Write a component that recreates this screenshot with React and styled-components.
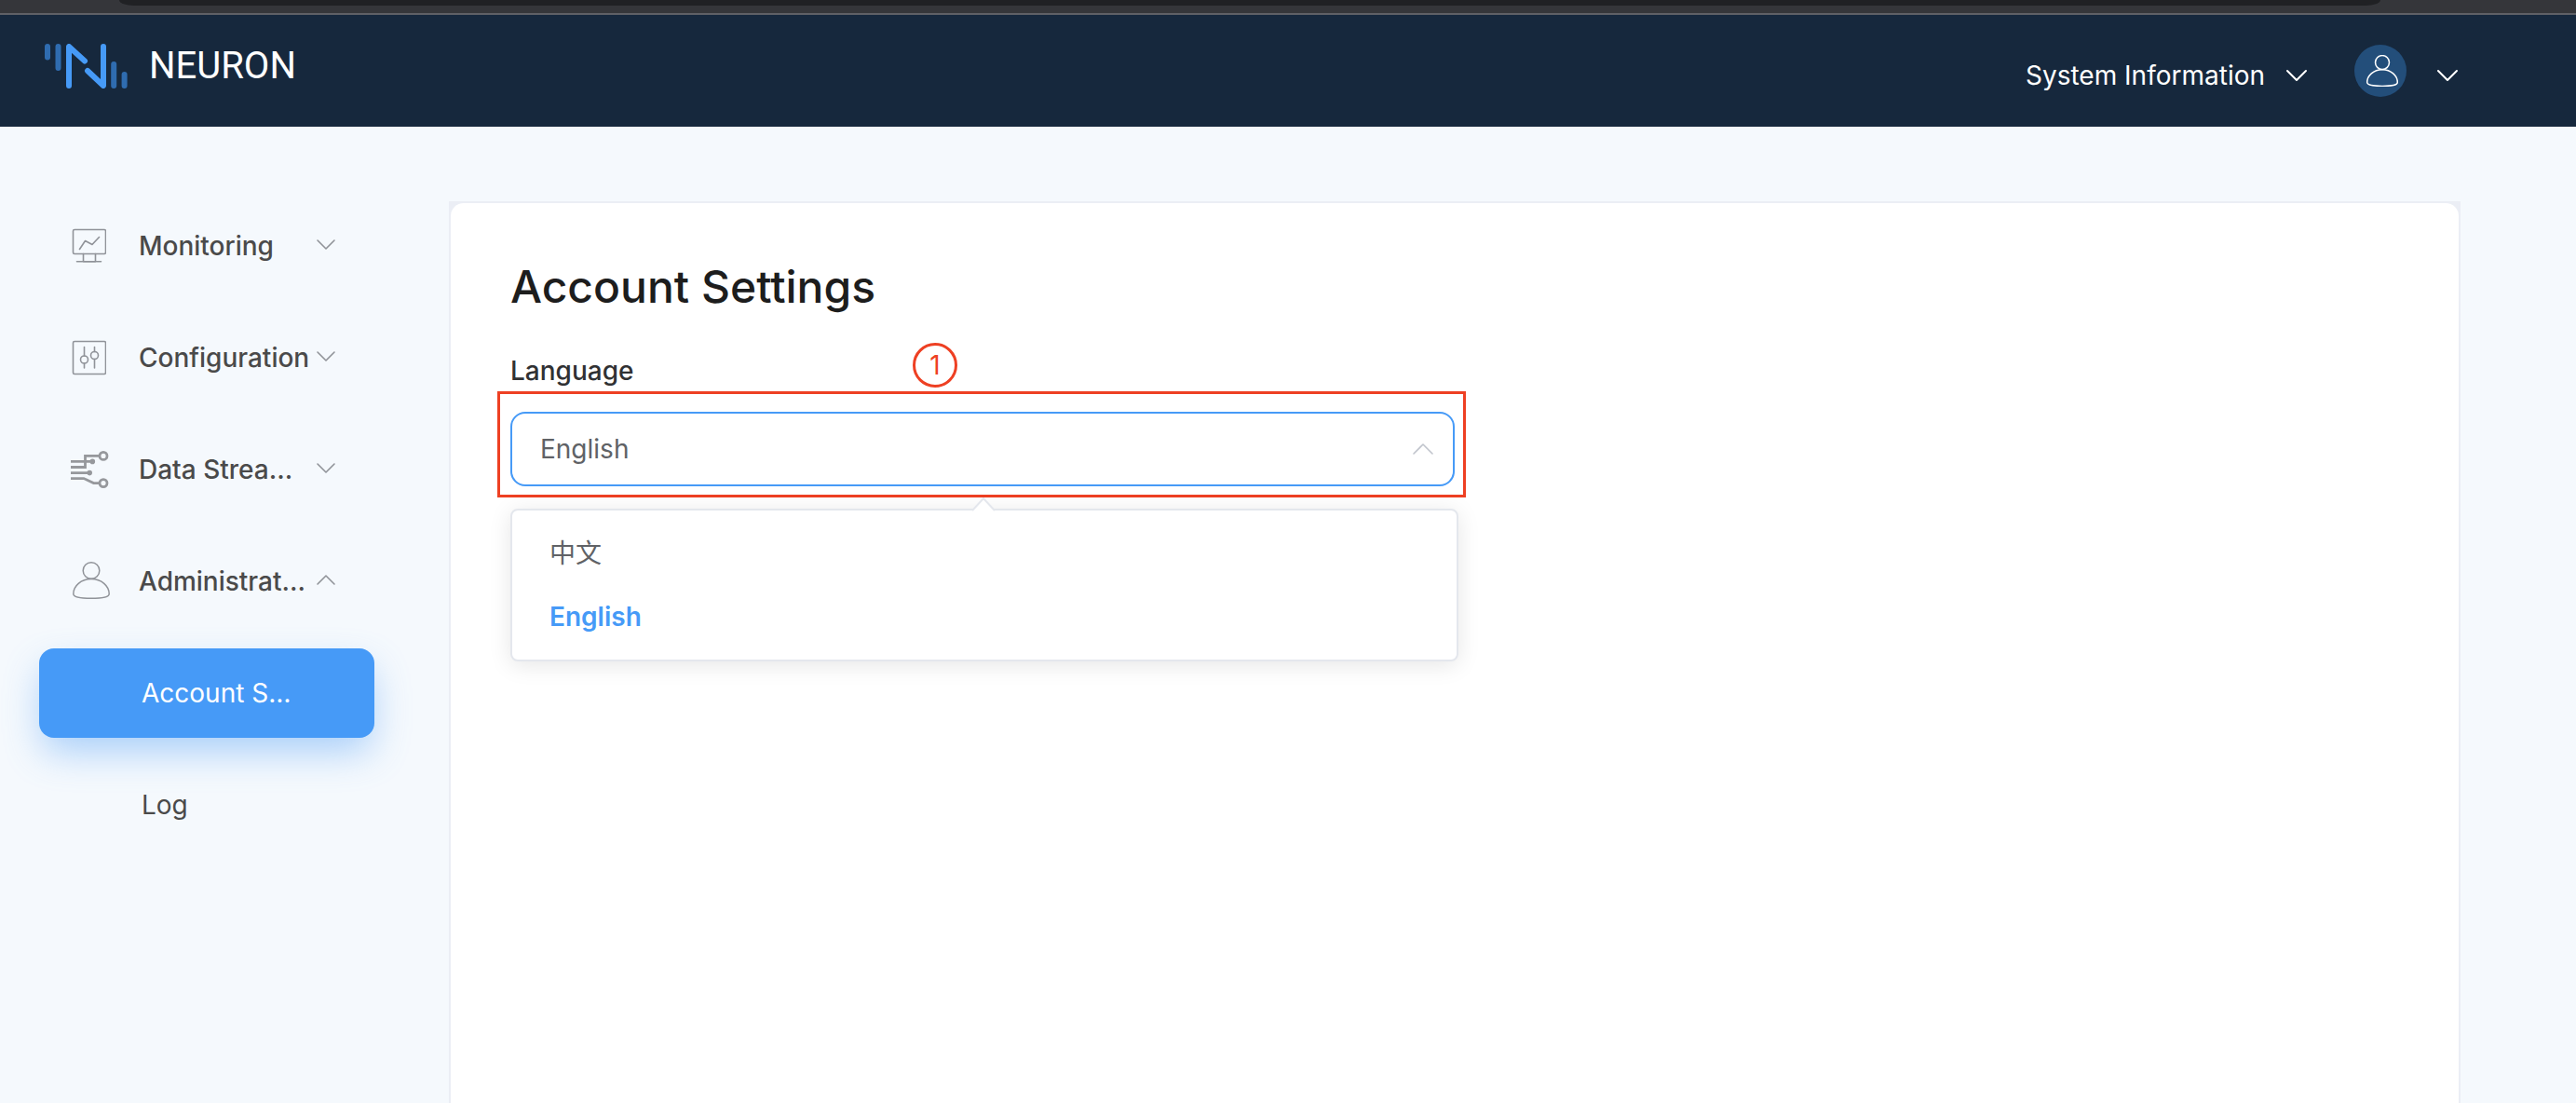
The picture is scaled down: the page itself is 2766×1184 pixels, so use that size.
import React from "react";
import styled, { createGlobalStyle, css } from "styled-components";

const GlobalStyle = createGlobalStyle`
  *, *::before, *::after { box-sizing: border-box; }
  html, body { margin: 0; background: #f5f9fd; }
  body {
    overflow: hidden;
    font-family: Inter, "Noto Sans CJK SC", sans-serif;
    font-size: 28px;
    line-height: 40px;
    color: #4a4a4a;
  }
  button, select { font: inherit; }
`;

const Page = styled.div`
  display: flex;
  flex-direction: column;
  height: 100vh;
`;

const BrowserEdge = styled.div`
  flex: none;
  height: 16px;
  padding: 0 210px 0 128px;
  background: #35363a;
  border-bottom: 2px solid #5f6066;
`;

const AddressBar = styled.div`
  height: 6px;
  background: #202124;
  border-radius: 0 0 16px 16px / 0 0 6px 6px;
`;

const TopBar = styled.header`
  flex: none;
  display: flex;
  justify-content: space-between;
  height: 120px;
  padding: 0 124px 0 48px;
  background: #16283d;
  color: #fff;
`;

const Brand = styled.a`
  display: flex;
  align-items: center;
  gap: 20px;
  height: 110px;
  color: #fff;
  font-family: Roboto, sans-serif;
  font-size: 40px;
  text-decoration: none;
`;

const Actions = styled.div`
  display: flex;
  gap: 48px;
  height: 120px;
  padding-top: 10px;
  align-items: center;
`;

const HeaderButton = styled.button`
  display: flex;
  align-items: center;
  gap: ${(p) => p.$gap}px;
  padding: 0;
  border: 0;
  background: none;
  color: #fff;
`;

const Avatar = styled.span`
  display: grid;
  place-items: center;
  width: 56px;
  height: 56px;
  margin-bottom: 10px;
  padding-left: 4px;
  border-radius: 50%;
  background: #234e7a;
`;

const Body = styled.div`
  flex: 1;
  display: flex;
  gap: 80px;
  padding: 80px 124px 0 42px;
`;

const Sidebar = styled.nav`
  flex: none;
  display: flex;
  flex-direction: column;
  gap: 24px;
  width: 360px;
`;

const menuRow = css`
  display: flex;
  align-items: center;
  height: 96px;
  border-radius: 16px;
  text-align: left;
`;

const MenuGroup = styled.button`
  ${menuRow}
  padding: 0 38px 0 32px;
  border: 0;
  background: none;
  color: #4a4a4a;
  font-weight: 500;
`;

const MenuIcon = styled.span`
  display: flex;
  width: 75px;
`;

const MenuLabel = styled.span`
  flex: 1;
  white-space: nowrap;
`;

const MenuArrow = styled.span`
  display: flex;
  color: #909399;
`;

const MenuLink = styled.a`
  ${menuRow}
  padding: 0 40px 0 110px;
  text-decoration: none;
  color: ${(p) => (p.$active ? "#fff" : "#4a4a4a")};
  background: ${(p) => (p.$active ? "#469af7" : "transparent")};
  box-shadow: ${(p) => (p.$active ? "0 18px 40px -4px rgba(70, 154, 247, 0.45)" : "none")};
`;

const CardFrame = styled.main`
  flex: 1;
  display: flex;
  padding: 2px 2px 0;
  background: #ebeef5;
`;

const Card = styled.section`
  flex: 1;
  padding: 60px 64px 0;
  border-radius: 14px 14px 0 0;
  background: #fff;
`;

const Title = styled.h1`
  margin: 0 0 40px;
  font-size: 48px;
  line-height: 60px;
  font-weight: 500;
  color: #1d1d1d;
`;

const Field = styled.div`
  position: relative;
  width: 1014px;
  max-width: 100%;
`;

const Label = styled.label`
  display: block;
  margin-bottom: 24px;
  font-weight: 500;
  color: #303133;
`;

const SelectBox = styled.div`
  position: relative;
  display: grid;
  align-items: center;
`;

const Select = styled.select`
  appearance: none;
  width: 100%;
  height: 80px;
  padding: 0 64px 0 30px;
  border: 2px solid #469af7;
  border-radius: 16px;
  outline: 0;
  background: #fff;
  color: #606266;
`;

const SelectArrow = styled.span`
  position: absolute;
  right: 20px;
  display: flex;
  color: #c0c4cc;
  pointer-events: none;
`;

const Highlight = styled.div`
  position: absolute;
  inset: -22px -12px -12px -14px;
  border: 3px solid #ee4023;
  pointer-events: none;
`;

const StepBadge = styled.span`
  position: absolute;
  top: -10px;
  left: 432px;
  display: grid;
  place-items: center;
  width: 48px;
  height: 48px;
  border: 3px solid #ee4023;
  border-radius: 50%;
  color: #ee4023;
`;

const Dropdown = styled.ul`
  position: absolute;
  top: calc(100% + 24px);
  left: 0;
  width: calc(100% + 4px);
  margin: 0;
  padding: 12px 0;
  list-style: none;
  border: 2px solid #e4e7ed;
  border-radius: 8px;
  background: #fff;
  box-shadow: 0 4px 24px rgba(0, 0, 0, 0.1);
`;

const DropdownTip = styled.svg`
  position: absolute;
  top: -14px;
  left: calc(50% - 13px);
`;

const Option = styled.li`
  padding: 14px 40px;
  color: ${(p) => (p.$selected ? "#469af7" : "#606266")};
  font-weight: ${(p) => (p.$selected ? 600 : 400)};
`;

const Logo = () => (
  <svg width="92" height="48" viewBox="0 0 92 48" fill="none" strokeWidth="6" strokeLinecap="round" strokeLinejoin="round">
    <path stroke="#2f6cb0" d="M3 3V14.500M14.500 3V26M74.200 22V45M85.600 33V45" />
    <path stroke="#469af7" d="M43 18.500 26 3V45M46 29 63 45V3" />
  </svg>
);

const Chevron = ({ up, small, weight = 2 }) => {
  const d = small
    ? up ? "M5 17 14 8 23 17" : "M5 8 14 17 23 8"
    : up ? "M4 19 14 9 24 19" : "M4 9 14 19 24 9";
  return (
    <svg width="28" height="28" viewBox="0 0 28 28" fill="none" stroke="currentColor" strokeWidth={weight} strokeLinecap="round" strokeLinejoin="round">
      <path d={d} />
    </svg>
  );
};

const UserIcon = ({ size, color, weight, viewBox = "0 0 40 40" }) => (
  <svg width={size} height={size} viewBox={viewBox} fill="none" stroke={color} strokeWidth={weight}>
    <circle cx="20" cy="9.500" r="8.800" />
    <path d="M20 18.500C9 18.500.8 26 .8 34.500C.8 38 8 39.300 20 39.300S39.200 38 39.200 34.500C39.200 26 31 18.500 20 18.500Z" />
  </svg>
);

const line = { fill: "none", stroke: "#909399", strokeWidth: 1.6, strokeLinecap: "round", strokeLinejoin: "round" };

const MonitorIcon = () => (
  <svg width="40" height="40" viewBox="0 0 40 40" {...line}>
    <rect x="4.500" y="2.500" width="35" height="26" rx="1.500" />
    <path d="M11.500 23.500 17.500 14.500 25 18.500 32.500 10.500M15.500 28.500V37H28.500V28.500M8.500 36.800H34.500" />
  </svg>
);

const SlidersIcon = () => (
  <svg width="40" height="40" viewBox="0 0 40 40" {...line}>
    <rect x="4.500" y="2.500" width="35" height="35" rx="1.500" />
    <circle cx="16.500" cy="22" r="4" />
    <circle cx="27.500" cy="17.500" r="4" />
    <path d="M16.500 8.500V18M16.500 26V31M27.500 8.500V13.500M27.500 21.500V31" />
  </svg>
);

const StreamIcon = () => (
  <svg width="44" height="44" viewBox="0 0 44 44" fill="none" stroke="#96989c" strokeWidth="2.800">
    <path d="M2 13.400H25M2 19.500H17.500V7.400H32M2 25.600H22M2 31.600H16L26.500 36.600H32" />
    <circle cx="37" cy="7.400" r="4" />
    <circle cx="37" cy="36.600" r="4" />
    <circle cx="25.300" cy="13.400" r="1.400" />
    <circle cx="22.200" cy="25.600" r="1.400" />
  </svg>
);

const groups = [
  { label: "Monitoring", icon: <MonitorIcon /> },
  { label: "Configuration", icon: <SlidersIcon /> },
  { label: "Data Strea…", icon: <StreamIcon /> },
  { label: "Administrat…", icon: <UserIcon size={44} color="#909399" weight={1.5} viewBox="-4 -1 44 44" />, open: true },
];

export default function App() {
  return (
    <Page>
      <GlobalStyle />
      <BrowserEdge>
        <AddressBar />
      </BrowserEdge>
      <TopBar>
        <Brand href="#">
          <Logo />
          NEURON
        </Brand>
        <Actions>
          <HeaderButton type="button" $gap={20}>
            System Information
            <Chevron />
          </HeaderButton>
          <HeaderButton type="button" $gap={30} aria-label="Account">
            <Avatar>
              <UserIcon size={34} color="#fff" weight={1.8} viewBox="0 0 40 40" />
            </Avatar>
            <Chevron />
          </HeaderButton>
        </Actions>
      </TopBar>
      <Body>
        <Sidebar>
          {groups.map((g) => (
            <MenuGroup key={g.label} type="button" aria-expanded={!!g.open}>
              <MenuIcon>{g.icon}</MenuIcon>
              <MenuLabel>{g.label}</MenuLabel>
              <MenuArrow>
                <Chevron small up={g.open} weight={1.6} />
              </MenuArrow>
            </MenuGroup>
          ))}
          <MenuLink href="#account" $active>
            Account S…
          </MenuLink>
          <MenuLink href="#log">Log</MenuLink>
        </Sidebar>
        <CardFrame>
          <Card>
            <Title>Account Settings</Title>
            <Field>
              <Label htmlFor="language">Language</Label>
              <StepBadge>1</StepBadge>
              <SelectBox>
                <Select id="language" defaultValue="en">
                  <option value="zh">中文</option>
                  <option value="en">English</option>
                </Select>
                <SelectArrow>
                  <Chevron up weight={1.6} />
                </SelectArrow>
                <Highlight />
              </SelectBox>
              <Dropdown>
                <DropdownTip width="24" height="15" viewBox="0 0 24 15">
                  <path d="M0 15V14L12 1 24 14V15Z" fill="#fff" />
                  <path d="M0 14 12 1 24 14" fill="none" stroke="#e4e7ed" strokeWidth="2" />
                </DropdownTip>
                <Option>中文</Option>
                <Option $selected>English</Option>
              </Dropdown>
            </Field>
          </Card>
        </CardFrame>
      </Body>
    </Page>
  );
}
